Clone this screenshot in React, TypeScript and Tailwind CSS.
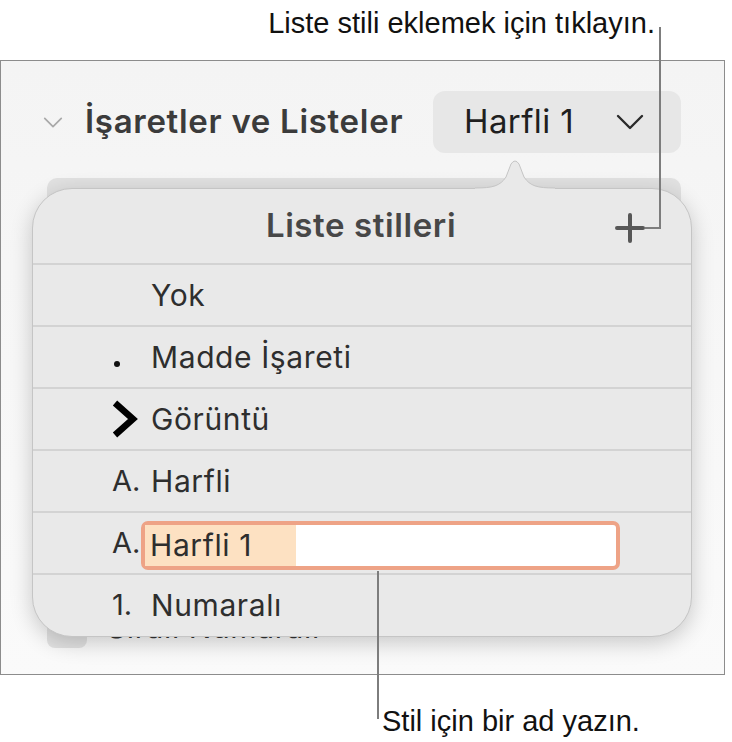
import React from 'react'

const ui = "font-['Inter','Noto_Sans',sans-serif]"
const note = "font-['Liberation_Sans','Arial',sans-serif]"

function ChevronDown({ className, strokeWidth = 2 }: { className?: string; strokeWidth?: number }) {
  return (
    <svg viewBox="0 0 28 16" className={className} fill="none">
      <polyline
        points="2,2 14,14 26,2"
        stroke="currentColor"
        strokeWidth={strokeWidth}
        strokeLinecap="round"
        strokeLinejoin="round"
      />
    </svg>
  )
}

function Row({ marker, children }: { marker?: React.ReactNode; children: React.ReactNode }) {
  return (
    <div className="flex h-[62px] items-center border-t-2 border-[#d3d3d3] pl-[79px]">
      <span className="flex w-[39px] items-center text-[29px] text-[#2e2e2e]">{marker}</span>
      <span className="text-[30px] tracking-[0.6px] text-[#2e2e2e]">{children}</span>
    </div>
  )
}

export default function App() {
  return (
    <div className={`relative h-[742px] w-[732px] overflow-hidden bg-white ${ui}`}>
      {/* inspector panel */}
      <div className="absolute left-0 top-[60px] h-[615px] w-[725px] border border-[#8c8c8c] bg-gradient-to-b from-[#f4f4f4] to-[#fafafa]">
        <div className="mt-[30px] flex h-[62px] items-center pl-[42px] pr-[43px]">
          <ChevronDown className="h-[11px] w-[20px] text-[#a9a9a9]" strokeWidth={2.5} />
          <span className="ml-[22px] text-[33px] font-semibold tracking-[0.7px] text-[#3b3b3b]">
            İşaretler ve Listeler
          </span>
          <div className="ml-auto flex h-[62px] w-[248px] items-center rounded-[12px] bg-[#e7e7e7] pl-[31px] pr-[37px]">
            <span className="text-[33px] tracking-[0.4px] text-[#1f1f1f]">Harfli 1</span>
            <ChevronDown className="ml-auto h-[16px] w-[28px] text-[#2b2b2b]" strokeWidth={2.4} />
          </div>
        </div>
        <div className="ml-[46px] mr-[43px] mt-[25px] h-[52px] rounded-[10px] bg-[#e1e1e1]" />
        <div className="mt-[375px] flex items-center pl-[46px]">
          <div className="h-[40px] w-[40px] rounded-[8px] bg-[#e2e2e2]" />
          <span className="ml-[20px] text-[30px] tracking-[0.6px] text-[#333]">Sıralı Numaralı</span>
        </div>
      </div>

      {/* list styles popover */}
      <div className="absolute left-[32px] top-[188px] h-[449px] w-[660px] rounded-[40px] border border-[#c5c5c5] bg-[#e9e9e9] shadow-[0_6px_22px_rgba(0,0,0,0.2)]">
        <div className="relative flex h-[74px] items-center justify-center">
          <span className="ml-[-2px] text-[33px] font-semibold tracking-[0.6px] text-[#474747]">Liste stilleri</span>
          <svg viewBox="0 0 32 32" className="absolute left-[581px] top-[23px] h-[32px] w-[32px]" fill="none">
            <path d="M16 3v26M3 16h26" stroke="#575757" strokeWidth={4} strokeLinecap="round" />
          </svg>
        </div>
        <Row>Yok</Row>
        <Row marker={<span className="ml-[2px] mt-[14px] block h-[6px] w-[6px] rounded-full bg-[#111]" />}>
          Madde İşareti
        </Row>
        <Row
          marker={
            <svg viewBox="0 0 28 40" className="ml-[-1px] h-[40px] w-[28px]" fill="none">
              <polyline points="4,4 22,20 4,36" stroke="#000" strokeWidth={6.5} strokeLinejoin="miter" />
            </svg>
          }
        >
          Görüntü
        </Row>
        <Row marker="A.">Harfli</Row>
        <div className="flex h-[62px] items-center border-t-2 border-[#d3d3d3] pl-[79px]">
          <span className="w-[29px] text-[29px] text-[#2e2e2e]">A.</span>
          <div className="mt-[4px] flex h-[49px] w-[479px] rounded-[7px] border-[4px] border-[#eea386] bg-white">
            <span className="flex items-center bg-[#fde1c2] pl-[5px] pr-[44px] text-[30px] tracking-[0.6px] text-[#2e2e2e]">
              Harfli 1
            </span>
          </div>
        </div>
        <Row marker="1.">Numaralı</Row>

        {/* arrow toward the popup button */}
        <svg viewBox="0 0 80 32" className="absolute left-[442px] top-[-30px] h-[32px] w-[80px]" fill="none">
          <path d="M0 29 C18 29 25 27 31 18 L36 5 Q40 -1 44 5 L49 18 C55 27 62 29 80 29 L80 32 L0 32 Z" fill="#e9e9e9" />
          <path d="M0 29 C18 29 25 27 31 18 L36 5 Q40 -1 44 5 L49 18 C55 27 62 29 80 29" stroke="#c5c5c5" strokeWidth={1} />
        </svg>
      </div>

      {/* callouts */}
      <div className={`absolute right-[77px] top-[2px] text-[29px] text-[#111] ${note}`}>
        Liste stili eklemek için tıklayın.
      </div>
      <div className="absolute left-[659px] top-[27px] h-[202px] w-[2px] bg-[#7d7d7d]" />
      <div className="absolute left-[645px] top-[227px] h-[2px] w-[16px] bg-[#7d7d7d]" />

      <div className="absolute left-[377px] top-[571px] h-[148px] w-[2px] bg-[#7d7d7d]" />
      <div className={`absolute left-[382px] top-[700px] text-[29px] text-[#111] ${note}`}>
        Stil için bir ad yazın.
      </div>
    </div>
  )
}
